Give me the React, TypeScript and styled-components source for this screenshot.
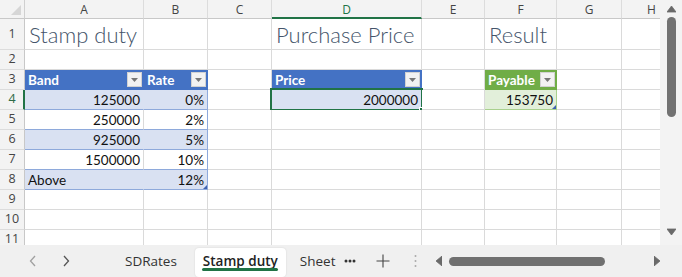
import React from "react";
import styled, { createGlobalStyle } from "styled-components";

const Global = createGlobalStyle`
  html, body { margin: 0; padding: 0; background: #fff; }
  body { font-family: Lato, "Open Sans", sans-serif; overflow: hidden; }
`;

const GRID = "#dadada";
const BLUE_FILL = "#d9e1f2";
const BLUE_LINE = "#8ea9db";
const HDR_BLUE = "#4472c4";
const HDR_GREEN = "#70ad47";
const GREEN_FILL = "#e2efda";
const GREEN_LINE = "#a9d08e";
const XL_GREEN = "#217346";

const COLS = [
  { key: "A", w: 119 },
  { key: "B", w: 64 },
  { key: "C", w: 64 },
  { key: "D", w: 150 },
  { key: "E", w: 63 },
  { key: "F", w: 72 },
  { key: "G", w: 65 },
  { key: "H", w: 60 },
];
const ROW_H = [31, 20, 20, 20, 20, 20, 20, 20, 20, 20, 20];

type Spec = {
  text?: string;
  kind?: "title" | "head" | "data";
  fill?: string;
  align?: "left" | "right";
  filter?: boolean;
  bottom?: string;
  right?: string;
  corner?: boolean;
  selected?: boolean;
};

const specs: Record<string, Spec> = {
  A1: { text: "Stamp duty", kind: "title" },
  D1: { text: "Purchase Price", kind: "title" },
  F1: { text: "Result", kind: "title" },
  A3: { text: "Band", kind: "head", fill: HDR_BLUE, filter: true, right: HDR_BLUE, bottom: HDR_BLUE },
  B3: { text: "Rate", kind: "head", fill: HDR_BLUE, filter: true, right: HDR_BLUE, bottom: HDR_BLUE },
  D3: { text: "Price", kind: "head", fill: HDR_BLUE, filter: true, right: HDR_BLUE, bottom: HDR_BLUE },
  F3: { text: "Payable", kind: "head", fill: HDR_GREEN, filter: true, right: HDR_GREEN, bottom: HDR_GREEN },
  D4: { text: "2000000", kind: "data", fill: BLUE_FILL, align: "right", bottom: BLUE_LINE, right: BLUE_LINE, selected: true },
  F4: { text: "153750", kind: "data", fill: GREEN_FILL, align: "right", bottom: GREEN_LINE, right: GREEN_LINE, corner: true },
};

const bands: [string, string, "left" | "right"][] = [
  ["125000", "0%", "right"],
  ["250000", "2%", "right"],
  ["925000", "5%", "right"],
  ["1500000", "10%", "right"],
  ["Above", "12%", "left"],
];
bands.forEach(([band, rate, align], i) => {
  const row = 4 + i;
  const filled = i % 2 === 0;
  specs["A" + row] = {
    text: band,
    kind: "data",
    fill: filled ? BLUE_FILL : undefined,
    align,
    bottom: BLUE_LINE,
    right: filled ? BLUE_FILL : GRID,
  };
  specs["B" + row] = {
    text: rate,
    kind: "data",
    fill: filled ? BLUE_FILL : undefined,
    align: "right",
    bottom: BLUE_LINE,
    right: BLUE_LINE,
    corner: row === 8,
  };
});

const Frame = styled.div`
  width: 682px;
  height: 277px;
  display: flex;
  flex-direction: column;
  background: #fff;
`;

const Main = styled.div`
  display: flex;
  height: 245px;
`;

const Viewport = styled.div`
  width: 660px;
  height: 245px;
  overflow: hidden;
`;

const Sheet = styled.div`
  display: grid;
  grid-template-columns: 25px ${COLS.map((c) => c.w + "px").join(" ")};
  grid-template-rows: 19px ${ROW_H.map((h) => h + "px").join(" ")};
`;

const Corner = styled.div`
  background: #f3f3f3;
  border-right: 1px solid #d0d0d0;
  border-bottom: 1px solid #c8c8c8;
  position: relative;
  box-sizing: border-box;
`;

const CornerMark = styled.svg`
  position: absolute;
  right: 3px;
  bottom: 3px;
`;

const ColHead = styled.div<{ $active?: boolean }>`
  background: #f3f3f3;
  box-sizing: border-box;
  border-right: 1px solid #dcdcdc;
  border-bottom: ${(p) => (p.$active ? `2px solid ${XL_GREEN}` : "1px solid #c8c8c8")};
  display: flex;
  align-items: center;
  justify-content: center;
  font-family: "Open Sans", sans-serif;
  font-size: 12px;
  color: ${(p) => (p.$active ? XL_GREEN : "#444")};
  padding-top: 1px;
`;

const RowHead = styled.div<{ $active?: boolean }>`
  background: #f3f3f3;
  box-sizing: border-box;
  border-bottom: 1px solid #dcdcdc;
  border-right: ${(p) => (p.$active ? `2px solid ${XL_GREEN}` : "1px solid #c8c8c8")};
  display: flex;
  align-items: center;
  justify-content: center;
  font-family: "Open Sans", sans-serif;
  font-size: 12.5px;
  line-height: 1;
  color: ${(p) => (p.$active ? "#2f6b48" : "#444")};
  padding-left: ${(p) => (p.$active ? "1px" : "0")};
`;

const Cell = styled.div<{
  $fill?: string;
  $align?: "left" | "right";
  $bottom?: string;
  $right?: string;
  $kind?: string;
}>`
  position: relative;
  box-sizing: border-box;
  min-width: 0;
  background: ${(p) => p.$fill || "#fff"};
  border-right: 1px solid ${(p) => p.$right || GRID};
  border-bottom: 1px solid ${(p) => p.$bottom || GRID};
  display: flex;
  align-items: ${(p) => (p.$kind === "title" ? "flex-end" : "center")};
  justify-content: ${(p) =>
    p.$kind === "head" ? "space-between" : p.$align === "right" ? "flex-end" : "flex-start"};
  padding: ${(p) => (p.$kind === "head" ? "0 1px 0 3px" : p.$kind === "title" ? "0 3px 1px 4px" : "1px 3px 0 3px")};
  white-space: nowrap;
  overflow: visible;
  font-size: ${(p) => (p.$kind === "title" ? "22px" : "13.5px")};
  font-weight: ${(p) => (p.$kind === "title" ? 300 : p.$kind === "head" ? 700 : 400)};
  color: ${(p) => (p.$kind === "title" ? "#44546a" : p.$kind === "head" ? "#fff" : "#111")};
  z-index: ${(p) => (p.$kind === "title" ? 1 : 0)};
`;

const FilterBtn = styled.div`
  width: 15px;
  height: 15px;
  box-sizing: border-box;
  background: #f2f2f2;
  border: 1px solid #d2d2d2;
  display: flex;
  align-items: center;
  justify-content: center;
  flex: none;
`;

const ResizeMark = styled.div`
  position: absolute;
  right: 0;
  bottom: 0;
  width: 0;
  height: 0;
  border-left: 4px solid transparent;
  border-bottom: 4px solid #3f62b0;
`;

const Selection = styled.div`
  position: absolute;
  left: -2px;
  top: -2px;
  right: -2px;
  bottom: -2px;
  border: 2px solid ${XL_GREEN};
  pointer-events: none;
  z-index: 2;
`;

const FillHandle = styled.div`
  position: absolute;
  right: -4px;
  bottom: -4px;
  width: 6px;
  height: 6px;
  background: ${XL_GREEN};
  border: 1px solid #fff;
  box-sizing: border-box;
`;

const VScroll = styled.div`
  width: 22px;
  height: 245px;
  background: #f3f3f3;
  display: flex;
  flex-direction: column;
  align-items: center;
  box-sizing: border-box;
  padding-top: 5px;
`;

const VThumb = styled.div`
  width: 9px;
  height: 100px;
  border-radius: 5px;
  background: #727272;
  margin-top: 4px;
`;

const Spacer = styled.div`
  flex: 1;
`;

const DownArrow = styled.div`
  margin-bottom: 6px;
`;

const TabBar = styled.div`
  height: 32px;
  background: #f0f0f0;
  display: flex;
  align-items: center;
  padding-left: 16px;
  font-family: "Open Sans", sans-serif;
  font-size: 13.5px;
  color: #333;
`;

const NavBtn = styled.div`
  width: 33px;
  height: 24px;
  display: flex;
  align-items: center;
  justify-content: center;
`;

const Tab = styled.div<{ $active?: boolean; $first?: boolean }>`
  height: 29px;
  margin-left: ${(p) => (p.$first ? "28px" : "3px")};
  padding: ${(p) => (p.$active ? "0 8px" : p.$first ? "0 15px" : "0 8px 0 11px")};
  display: flex;
  align-items: center;
  gap: 9px;
  position: relative;
  background: ${(p) => (p.$active ? "#fff" : "transparent")};
  font-weight: ${(p) => (p.$active ? 600 : 400)};
  color: ${(p) => (p.$active ? "#222" : "#333")};
  border-radius: 4px;
  box-shadow: ${(p) => (p.$active ? "0 0 2px rgba(0,0,0,0.12)" : "none")};
  margin-top: 2px;
  padding-bottom: 3px;
  box-sizing: border-box;
`;

const TabUnderline = styled.div`
  position: absolute;
  left: 7px;
  right: 8px;
  bottom: 6px;
  height: 3px;
  border-radius: 2px;
  background: ${XL_GREEN};
`;

const AddBtn = styled.div`
  width: 28px;
  height: 24px;
  margin-left: 5px;
  display: flex;
  align-items: center;
  justify-content: center;
`;

const Divider = styled.div`
  width: 10px;
  margin-left: 13px;
  display: flex;
  justify-content: center;
`;

const HScroll = styled.div`
  margin-left: 11px;
  width: 232px;
  height: 26px;
  display: flex;
  align-items: center;
  box-sizing: border-box;
  padding: 0 3px 0 5px;
`;

const HThumb = styled.div`
  width: 156px;
  height: 9px;
  border-radius: 5px;
  background: #707070;
  margin-left: 7px;
`;

const Tri = ({
  dir,
  color = "#6a6a6a",
  small,
}: {
  dir: "up" | "down" | "left" | "right";
  color?: string;
  small?: boolean;
}) => {
  if (small) {
    return (
      <svg width="7" height="4" viewBox="0 0 7 4">
        <polygon points="0,0 7,0 3.5,4" fill={color} />
      </svg>
    );
  }
  const pts = {
    up: "0,7 4.5,1 9,7",
    down: "0,1 9,1 4.5,7",
    left: "6,0 6,10 0,5",
    right: "0,0 0,10 6,5",
  }[dir];
  const vert = dir === "up" || dir === "down";
  return (
    <svg width={vert ? 9 : 6} height={vert ? 8 : 10} viewBox={vert ? "0 0 9 8" : "0 0 6 10"}>
      <polygon points={pts} fill={color} strokeLinejoin="round" stroke={color} strokeWidth={0.8} />
    </svg>
  );
};

const Chevron = ({ dir, color }: { dir: "left" | "right"; color: string }) => (
  <svg width="8" height="12" viewBox="0 0 8 12">
    <polyline
      points={dir === "left" ? "6,1 1.5,6 6,11" : "2,1 6.5,6 2,11"}
      fill="none"
      stroke={color}
      strokeWidth="1.3"
    />
  </svg>
);

export default function App() {
  return (
    <Frame>
      <Global />
      <Main>
        <Viewport>
          <Sheet>
            <Corner>
              <CornerMark width="10" height="10" viewBox="0 0 10 10">
                <polygon points="10,0 10,10 0,10" fill="#d6d6d6" />
              </CornerMark>
            </Corner>
            {COLS.map((c) => (
              <ColHead key={c.key} $active={c.key === "D"}>
                {c.key}
              </ColHead>
            ))}
            {ROW_H.map((_, ri) => {
              const row = ri + 1;
              return (
                <React.Fragment key={row}>
                  <RowHead $active={row === 4}>{row}</RowHead>
                  {COLS.map((c) => {
                    const s = specs[c.key + row] || {};
                    return (
                      <Cell
                        key={c.key}
                        $fill={s.fill}
                        $align={s.align}
                        $bottom={s.bottom}
                        $right={s.right}
                        $kind={s.kind}
                      >
                        {s.text && <span>{s.text}</span>}
                        {s.filter && (
                          <FilterBtn>
                            <Tri dir="down" color="#777" small />
                          </FilterBtn>
                        )}
                        {s.corner && <ResizeMark />}
                        {s.selected && (
                          <Selection>
                            <FillHandle />
                          </Selection>
                        )}
                      </Cell>
                    );
                  })}
                </React.Fragment>
              );
            })}
          </Sheet>
        </Viewport>
        <VScroll>
          <Tri dir="up" />
          <VThumb />
          <Spacer />
          <DownArrow>
            <Tri dir="down" />
          </DownArrow>
        </VScroll>
      </Main>
      <TabBar>
        <NavBtn>
          <Chevron dir="left" color="#a0a0a0" />
        </NavBtn>
        <NavBtn>
          <Chevron dir="right" color="#555" />
        </NavBtn>
        <Tab $first>SDRates</Tab>
        <Tab $active>
          Stamp duty
          <TabUnderline />
        </Tab>
        <Tab>
          Sheet
          <svg width="12" height="4" viewBox="0 0 12 4">
            <circle cx="2" cy="2" r="1.5" fill="#333" />
            <circle cx="6" cy="2" r="1.5" fill="#333" />
            <circle cx="10" cy="2" r="1.5" fill="#333" />
          </svg>
        </Tab>
        <AddBtn>
          <svg width="14" height="14" viewBox="0 0 14 14">
            <path d="M7 0.5V13.5M0.5 7H13.5" stroke="#444" strokeWidth="1.1" />
          </svg>
        </AddBtn>
        <Divider>
          <svg width="3" height="14" viewBox="0 0 3 14">
            <circle cx="1.5" cy="2" r="1" fill="#aaa" />
            <circle cx="1.5" cy="7" r="1" fill="#aaa" />
            <circle cx="1.5" cy="12" r="1" fill="#aaa" />
          </svg>
        </Divider>
        <HScroll>
          <Tri dir="left" />
          <HThumb />
          <Spacer />
          <Tri dir="right" />
        </HScroll>
      </TabBar>
    </Frame>
  );
}
